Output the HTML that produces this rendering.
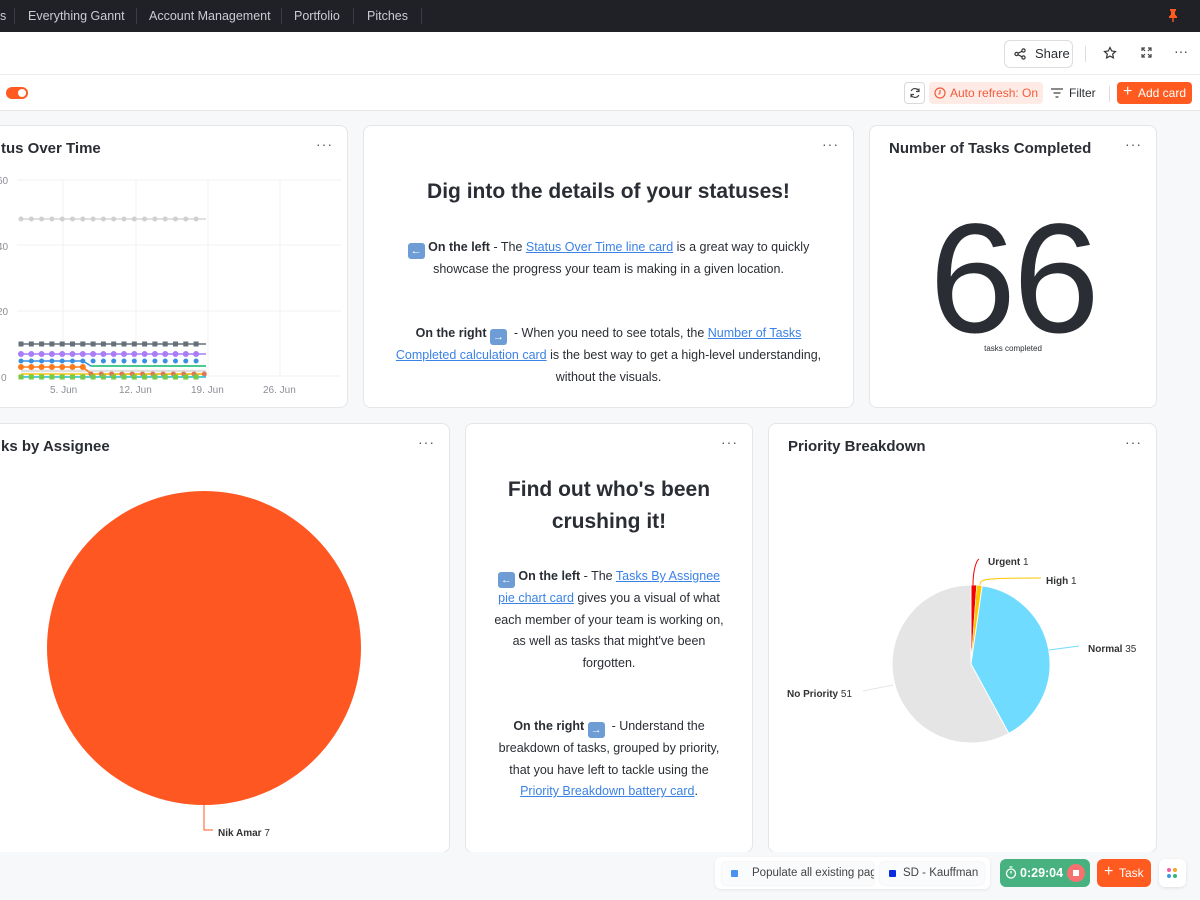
<!DOCTYPE html>
<html><head><meta charset="utf-8"><style>
*{box-sizing:border-box;margin:0;padding:0}
body{width:1200px;height:900px;overflow:hidden;background:#f7f8fa;font-family:"Liberation Sans",sans-serif;color:#2a2e34;position:relative}
.nav{position:absolute;left:0;top:0;width:1200px;height:32px;background:#1f2127;color:#c9ccd2;font-size:12.5px}
.nav span{position:absolute;top:9px}
.nav i{position:absolute;top:8px;width:1px;height:16px;background:#3a3d45}
.hdr{position:absolute;left:0;top:32px;width:1200px;height:43px;background:#fff;border-bottom:1px solid #ececec}
.tb{position:absolute;left:0;top:75px;width:1200px;height:36px;background:#fff;border-bottom:1px solid #e6e6e6}
.card{position:absolute;background:#fff;border:1px solid #e5e6e9;border-radius:8px;overflow:hidden}
.ttl{position:absolute;left:19px;top:14px;font-size:15px;font-weight:bold;color:#2a2e34}
.dots{position:absolute;right:14px;top:10px;font-size:14px;color:#555;letter-spacing:1px}
.txt{position:absolute;text-align:center;font-size:12.5px;line-height:21.5px;color:#2a2e34}
a{color:#3b82e6;text-decoration:underline}
h2{font-size:21px;font-weight:bold;color:#2a2e34;line-height:32px}
.emo{display:inline-block;width:17px;height:16px;background:#6d9dd4;border-radius:3px;color:#fff;font-size:11px;line-height:16px;vertical-align:-3px;text-align:center;font-weight:bold}
</style></head><body>
<div class="nav">
<span style="left:0">s</span><i style="left:14px"></i>
<span style="left:28px">Everything Gannt</span><i style="left:136px"></i>
<span style="left:149px">Account Management</span><i style="left:281px"></i>
<span style="left:294px">Portfolio</span><i style="left:353px"></i>
<span style="left:367px">Pitches</span><i style="left:421px"></i>
<svg style="position:absolute;left:1168px;top:9px" width="10" height="13" viewBox="0 0 10 13" fill="#ff5a1f"><path d="M2 0h6v1.5L7 2.5v3l2 2V9H1V7.5l2-2v-3L2 1.5z"/><rect x="4.3" y="9" width="1.4" height="4"/></svg>
</div>
<div class="hdr">
<div style="position:absolute;left:1004px;top:8px;width:69px;height:28px;border:1px solid #dcdde0;border-radius:6px;font-size:13px;color:#2a2e34;line-height:26px;padding-left:30px">Share
<svg style="position:absolute;left:9px;top:7px" width="12" height="12" viewBox="0 0 12 12" fill="none" stroke="#333" stroke-width="1.2"><circle cx="9.5" cy="2.5" r="1.6"/><circle cx="2.5" cy="6" r="1.6"/><circle cx="9.5" cy="9.5" r="1.6"/><path d="M4 5.2L8 3.3M4 6.8L8 8.7"/></svg></div>
<i style="position:absolute;left:1085px;top:14px;width:1px;height:16px;background:#ddd"></i>
<svg style="position:absolute;left:1103px;top:14px" width="14" height="14" viewBox="0 0 14 14" fill="none" stroke="#333" stroke-width="1.2"><path d="M7 1.5l1.7 3.5 3.8.5-2.8 2.6.7 3.8L7 10.1 3.6 11.9l.7-3.8L1.5 5.5l3.8-.5z"/></svg>
<svg style="position:absolute;left:1141px;top:15px" width="11" height="11" viewBox="0 0 11 11" fill="none" stroke="#444" stroke-width="1.2"><path d="M1 4V1h3M7 1h3v3M10 7v3H7M4 10H1V7M1 1l3 3M10 1L7 4M10 10L7 7M1 10l3-3"/></svg>
<span style="position:absolute;left:1174px;top:11px;font-size:14px;color:#444">···</span>
</div>
<div class="tb">
<div style="position:absolute;left:6px;top:12px;width:22px;height:12px;border-radius:6px;background:#ff5a1f"><div style="position:absolute;right:2px;top:2px;width:8px;height:8px;border-radius:50%;background:#fff"></div></div>
<div style="position:absolute;left:904px;top:7px;width:21px;height:22px;border:1px solid #d8d9dc;border-radius:4px"><svg style="position:absolute;left:4px;top:4px" width="12" height="12" viewBox="0 0 12 12" fill="none" stroke="#444" stroke-width="1.2"><path d="M10 4.5A4.2 4.2 0 0 0 2.2 4M2 7.5A4.2 4.2 0 0 0 9.8 8M10 1.5v3H7M2 10.5v-3h3"/></svg></div>
<div style="position:absolute;left:929px;top:7px;width:114px;height:22px;background:#ffebe6;border-radius:4px;color:#f25b3a;font-size:12px;line-height:22px;padding-left:21px">Auto refresh: On<svg style="position:absolute;left:5px;top:5px" width="12" height="12" viewBox="0 0 12 12" fill="none" stroke="#f25b3a" stroke-width="1.2"><circle cx="6" cy="6" r="5"/><path d="M6 3v3L4.5 7.5"/></svg></div>
<div style="position:absolute;left:1051px;top:11px;font-size:12px;color:#2a2e34;padding-left:18px">Filter<svg style="position:absolute;left:0;top:2px" width="12" height="10" viewBox="0 0 12 10" stroke="#444" stroke-width="1.2"><path d="M0 1h12M2.5 5h7M4.5 9h3"/></svg></div>
<i style="position:absolute;left:1109px;top:11px;width:1px;height:16px;background:#ddd"></i>
<div style="position:absolute;left:1117px;top:7px;width:75px;height:22px;background:#ff5a1f;border-radius:4px;color:#fff;font-size:12px;line-height:22px;padding-left:21px"><span style="position:absolute;left:6px;top:-1px;font-size:16px">+</span>Add card</div>
</div>

<!-- Card 1: Status over time -->
<div class="card" style="left:-10px;top:125px;width:358px;height:283px">
<div class="ttl" style="left:10px">tus Over Time</div><div class="dots">···</div>
<svg style="position:absolute;left:0;top:0" width="358" height="283">
<g fill="#8a8e95" font-size="10" font-family="Liberation Sans">
<text x="6" y="58">60</text><text x="6" y="124">40</text><text x="6" y="189">20</text><text x="10" y="255">0</text>
<text x="59" y="267">5. Jun</text><text x="128" y="267">12. Jun</text><text x="200" y="267">19. Jun</text><text x="272" y="267">26. Jun</text>
</g>
<g fill="none">
<g stroke="#f0f0f0" stroke-width="1"><path d="M26 54H350M26 119H350M26 185H350M26 250H350M72 54V250M145 54V250M217 54V250M289 54V250"/></g>
<path d="M30 93H215" stroke="#d6d6d6" stroke-width="1.5"/><path d="M30 93H215" stroke="#d0d0d0" stroke-width="5" stroke-dasharray="0 10.3" stroke-linecap="round"/>
<path d="M30 218H215" stroke="#66707a" stroke-width="1.5"/><path d="M30 218H215" stroke="#66707a" stroke-width="5" stroke-dasharray="0 10.3" stroke-linecap="square"/>
<path d="M30 228H215" stroke="#a97cf8" stroke-width="1.5"/><path d="M30 228H215" stroke="#a97cf8" stroke-width="6" stroke-dasharray="0 10.3" stroke-linecap="round"/>
<path d="M30 235H92L100 240H215" stroke="#3b8fe0" stroke-width="1.5"/><path d="M30 235H215" stroke="#3b8fe0" stroke-width="5" stroke-dasharray="0 10.3" stroke-linecap="round"/>
<path d="M100 240H215" stroke="#2ecc71" stroke-width="1.5"/>
<path d="M30 245H215" stroke="#e0e0e0" stroke-width="2.5"/>
<path d="M30 241H92L100 248H215" stroke="#ff7a1a" stroke-width="1.5"/><path d="M30 241H92" stroke="#ff7a1a" stroke-width="6" stroke-dasharray="0 10.3" stroke-linecap="round"/>
<path d="M30 248H215" stroke="#f5c518" stroke-width="1.5"/><path d="M100 248H215" stroke="#d87a5a" stroke-width="5" stroke-dasharray="0 10.3" stroke-linecap="round"/>
<path d="M30 251H215" stroke="#20c0d0" stroke-width="1.5"/><path d="M30 251H215" stroke="#7ac943" stroke-width="5" stroke-dasharray="0 10.3" stroke-linecap="square"/>
</g>
</svg>
</div>

<!-- Card 2 -->
<div class="card" style="left:363px;top:125px;width:491px;height:283px">
<div class="dots">···</div>
<div class="txt" style="left:0;width:489px;top:50px"><h2>Dig into the details of your statuses!</h2></div>
<div class="txt" style="left:28px;width:433px;top:111px"><span class="emo">&#x2190;</span> <b>On the left</b> - The <a>Status Over Time line card</a> is a great way to quickly showcase the progress your team is making in a given location.</div>
<div class="txt" style="left:20px;width:449px;top:197px"><b>On the right</b> <span class="emo">&#x2192;</span> &nbsp;- When you need to see totals, the <a>Number of Tasks</a> <a>Completed calculation card</a> is the best way to get a high-level understanding, without the visuals.</div>
</div>

<!-- Card 3 -->
<div class="card" style="left:869px;top:125px;width:288px;height:283px">
<div class="ttl">Number of Tasks Completed</div><div class="dots">···</div>
<div style="position:absolute;left:0;width:286px;top:78px;text-align:center;font-size:156px;line-height:150px;color:#2a2e34;letter-spacing:-3px">66</div>
<div style="position:absolute;left:0;width:286px;top:218px;text-align:center;font-size:8px;color:#2a2e34">tasks completed</div>
</div>

<!-- Card 4 -->
<div class="card" style="left:-10px;top:423px;width:460px;height:430px">
<div class="ttl" style="left:10px">ks by Assignee</div><div class="dots">···</div>
<svg style="position:absolute;left:0;top:0" width="460" height="430">
<circle cx="213" cy="224" r="157" fill="#ff5722"/>
<path d="M213 381V406H222" stroke="#ff5722" fill="none" stroke-width="1"/>
<text x="227" y="412" font-size="10" font-family="Liberation Sans" fill="#333"><tspan font-weight="bold">Nik Amar</tspan> 7</text>
</svg>
</div>

<!-- Card 5 -->
<div class="card" style="left:465px;top:423px;width:288px;height:430px">
<div class="dots">···</div>
<div class="txt" style="left:0;width:286px;top:50px"><h2>Find out who's been crushing it!</h2></div>
<div class="txt" style="left:24px;width:238px;top:142px"><span class="emo">&#x2190;</span> <b>On the left</b> - The <a>Tasks By Assignee</a> <a>pie chart card</a> gives you a visual of what each member of your team is working on, as well as tasks that might've been forgotten.</div>
<div class="txt" style="left:24px;width:238px;top:292px"><b>On the right</b> <span class="emo">&#x2192;</span> &nbsp;- Understand the breakdown of tasks, grouped by priority, that you have left to tackle using the <a>Priority Breakdown battery card</a>.</div>
</div>

<!-- Card 6 -->
<div class="card" style="left:768px;top:423px;width:389px;height:430px">
<div class="ttl">Priority Breakdown</div><div class="dots">···</div>
<svg style="position:absolute;left:-768px;top:-423px" width="1200" height="900">
<path d="M970 663L970 584A79 79 0 0 1 975.6 584.2Z" fill="#f30000" stroke="#fff" stroke-width="0.5"/>
<path d="M970 663L975.6 584.2A79 79 0 0 1 981.2 584.8Z" fill="#ffc400" stroke="#fff" stroke-width="0.5"/>
<path d="M970 663L981.2 584.8A79 79 0 0 1 1007.8 732.4Z" fill="#6fdcff" stroke="#fff" stroke-width="1"/>
<path d="M970 663L1007.8 732.4A79 79 0 1 1 970 584Z" fill="#e5e5e5" stroke="#fff" stroke-width="1"/>
<path d="M972 584C972 570 975 560 978 558" stroke="#f30000" fill="none"/>
<path d="M979 584C979 578 982 577 1040 577" stroke="#ffc400" fill="none"/>
<path d="M1048 649L1078 645" stroke="#6fdcff" fill="none"/>
<path d="M892 684L862 690" stroke="#e5e5e5" fill="none"/>
<g font-size="10" font-family="Liberation Sans" fill="#333">
<text x="987" y="564"><tspan font-weight="bold">Urgent</tspan> 1</text>
<text x="1045" y="583"><tspan font-weight="bold">High</tspan> 1</text>
<text x="1087" y="651"><tspan font-weight="bold">Normal</tspan> 35</text>
<text x="786" y="696"><tspan font-weight="bold">No Priority</tspan> 51</text>
</g></svg>
</div>

<!-- bottom bar -->
<div style="position:absolute;left:0;top:852px;width:1200px;height:48px;background:#f7f8fa"></div>
<div style="position:absolute;left:715px;top:857px;width:275px;height:32px;background:#fff;border-radius:6px;box-shadow:0 1px 3px rgba(0,0,0,.08)">
<div style="position:absolute;left:7px;top:5px;width:152px;height:23px;background:#fafbfc;border-radius:4px;box-shadow:0 0 2px rgba(0,0,0,.1);font-size:11.5px;color:#444;line-height:23px;padding-left:30px;white-space:nowrap;overflow:hidden">Populate all existing pag<i style="position:absolute;left:9px;top:8px;width:7px;height:7px;background:#4a90f0;border-radius:1px"></i></div>
<div style="position:absolute;left:165px;top:5px;width:104px;height:23px;background:#fafbfc;border-radius:4px;box-shadow:0 0 2px rgba(0,0,0,.1);font-size:11.5px;color:#444;line-height:23px;padding-left:23px;white-space:nowrap;overflow:hidden">SD - Kauffman<i style="position:absolute;left:9px;top:8px;width:7px;height:7px;background:#0a2be0;border-radius:1px"></i></div>
</div>
<div style="position:absolute;left:1000px;top:859px;width:90px;height:28px;background:#47b27f;border-radius:6px;color:#fff;font-size:12.5px;font-weight:bold;line-height:28px;padding-left:20px">0:29:04
<svg style="position:absolute;left:5px;top:7px" width="12" height="13" viewBox="0 0 12 13" fill="none" stroke="#fff" stroke-width="1.3"><circle cx="6" cy="7.5" r="4.5"/><path d="M4.5 1h3M6 7.5V5"/></svg>
<div style="position:absolute;left:67px;top:5px;width:18px;height:18px;border-radius:50%;background:#f87171"><i style="position:absolute;left:6px;top:6px;width:6px;height:6px;background:#fff"></i></div></div>
<div style="position:absolute;left:1097px;top:859px;width:54px;height:28px;background:#ff5a1f;border-radius:6px;color:#fff;font-size:12px;line-height:28px;padding-left:22px"><span style="position:absolute;left:7px;top:-1px;font-size:16px">+</span>Task</div>
<div style="position:absolute;left:1159px;top:859px;width:27px;height:28px;background:#fff;border-radius:6px;box-shadow:0 1px 3px rgba(0,0,0,.1)">
<i style="position:absolute;left:8px;top:9px;width:4px;height:4px;border-radius:50%;background:#ef5da8"></i><i style="position:absolute;left:14px;top:9px;width:4px;height:4px;border-radius:50%;background:#f5a623"></i>
<i style="position:absolute;left:8px;top:15px;width:4px;height:4px;border-radius:50%;background:#3b9ae0"></i><i style="position:absolute;left:14px;top:15px;width:4px;height:4px;border-radius:50%;background:#35b57a"></i></div>
</body></html>
